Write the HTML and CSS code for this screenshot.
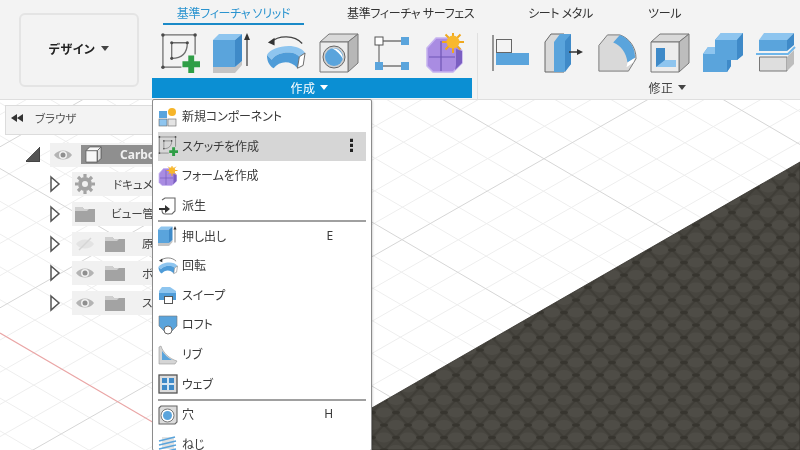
FILE: index.html
```html
<!DOCTYPE html>
<html lang="ja">
<head>
<meta charset="utf-8">
<title>デザイン</title>
<link rel="stylesheet" href="styles.css">
</head>
<body>
<svg class="sprite" width="0" height="0" aria-hidden="true">
  <defs>
    <symbol id="i-sketch" viewBox="0 0 41 41">
      <g fill="none" stroke="#6d6d6d" stroke-width="1.300">
        <path d="M3 2H36V22M3 2V35H22"/>
        <path d="M12 10H28M12 10V26"/>
        <path d="M28 10C28 20 23 26 12 26"/>
      </g>
      <g fill="#4a4a4a">
        <circle cx="3" cy="2" r="1.800"/><circle cx="36" cy="2" r="1.800"/><circle cx="3" cy="35" r="1.800"/>
        <circle cx="12" cy="10" r="1.600"/><circle cx="28" cy="10" r="1.600"/><circle cx="12" cy="26" r="1.600"/>
      </g>
      <path d="M29 23h6v6h6v6h-6v6h-6v-6h-6v-6h6z" fill="#2f9e46"/>
    </symbol>
    <symbol id="i-extrude" viewBox="0 0 40 40">
      <path d="M0 34H22L29 28V32L22 40H0z" fill="#c4c4c4"/>
      <path d="M0 7L6 1H29L22 7z" fill="#8ec5ef"/>
      <path d="M0 7H22V34H0z" fill="#5aa4dc"/>
      <path d="M22 7L29 1V28L22 34z" fill="#3f8ac8"/>
      <path d="M34 5V33" stroke="#444" stroke-width="1.300"/>
      <path d="M34 0L37 7H31z" fill="#333"/>
    </symbol>
    <symbol id="i-revolve" viewBox="0 0 42 40">
      <path d="M5 9C13 1 30 1 38 10" fill="none" stroke="#444" stroke-width="1.300"/>
      <path d="M2 9L9 4L9 12z" fill="#333"/>
      <path d="M1 22C6 12 34 8 41 20L35 24C30 17 12 18 6 27z" fill="#8ec5ef"/>
      <path d="M1 22L6 27C12 18 30 17 35 24L33 36C26 27 14 28 8 36C3 33 1 28 1 22z" fill="#4f9cd8"/>
      <path d="M35 24L41 20L39 33L33 36z" fill="#fff" stroke="#666" stroke-width="1"/>
    </symbol>
    <symbol id="i-hole" viewBox="0 0 40 40">
      <path d="M1 9L10 1H39L29 9z" fill="#d9d9d9" stroke="#777"/>
      <path d="M29 9L39 1V30L29 39z" fill="#b7b7b7" stroke="#777"/>
      <path d="M1 9H29V39H1z" fill="#ececec" stroke="#777"/>
      <circle cx="15" cy="24" r="11" fill="#cfcfcf" stroke="#666"/>
      <circle cx="15" cy="24" r="9" fill="#5aa4dc"/>
      <path d="M13 15.300C19 15 24 20 24 26C21 21 18 18 13 15.300z" fill="#fff"/>
    </symbol>
    <symbol id="i-pattern" viewBox="0 0 36 40">
      <path d="M5 8H31M5 8V33M9 33H31" stroke="#777" stroke-width="1.300" fill="none"/>
      <rect x="1" y="4" width="8" height="8" fill="#fff" stroke="#555"/>
      <rect x="27" y="4" width="8" height="8" fill="#5aa4dc"/>
      <rect x="1" y="29" width="8" height="8" fill="#5aa4dc"/>
      <rect x="27" y="29" width="8" height="8" fill="#5aa4dc"/>
    </symbol>
    <symbol id="i-form" viewBox="0 0 40 40">
      <path d="M2 15L11 5H26L37 18V30L28 39H8L2 33z" fill="#a98ce2" stroke="#c6b3f0" stroke-width="1.500" stroke-linejoin="round"/>
      <path d="M30 37L37 30V18L31 16V32z" fill="#7b5fc2"/>
      <path d="M4 24H30M16 8V38" stroke="#6f55b5" stroke-width="1.200"/>
      <g stroke="#f0a81e" stroke-width="2">
        <path d="M28 -2V20M17 9H39M20.500 1.500L35.500 16.500M35.500 1.500L20.500 16.500"/>
      </g>
      <circle cx="28" cy="9" r="6.500" fill="#f8b82e"/>
    </symbol>
    <symbol id="i-align" viewBox="0 0 40 40">
      <path d="M2 2V38" stroke="#777" stroke-width="1.500"/>
      <rect x="5.500" y="6.500" width="15" height="13" fill="#f3f3f3" stroke="#666"/>
      <rect x="5" y="20" width="33" height="12" fill="#5aa4dc"/>
    </symbol>
    <symbol id="i-press" viewBox="0 0 40 40">
      <path d="M1 39V9L7 1H20V39z" fill="#d9d9d9" stroke="#666"/>
      <path d="M10 9L16 1H27V31L20 39H10z" fill="#5aa4dc"/>
      <path d="M21 8L27 1V31L21 39z" fill="#3f8ac8"/>
      <path d="M25 19H36" stroke="#333" stroke-width="1.500"/>
      <path d="M39 19L33 16V22z" fill="#333"/>
    </symbol>
    <symbol id="i-fillet" viewBox="0 0 42 40">
      <path d="M2 39V12L11 1H24C33 4 41 13 41 26L33 39z" fill="#d9d9d9" stroke="#777"/>
      <path d="M17 9L24 1C33 4 40 13 40 25L32 30C31 20 25 12 17 9z" fill="#5aa4dc"/>
      <path d="M32 30L40 25L38 30L31 35z" fill="#fff"/>
    </symbol>
    <symbol id="i-shell" viewBox="0 0 40 40">
      <path d="M1 9L10 1H39L29 9z" fill="#d9d9d9" stroke="#777"/>
      <path d="M29 9L39 1V30L29 39z" fill="#bdbdbd" stroke="#777"/>
      <path d="M1 9H29V39H1z" fill="#ececec" stroke="#777"/>
      <path d="M6 15H15V27H26V34H6z" fill="#8ec5ef"/>
      <path d="M6 15H15V27L6 34z" fill="#3f8ac8"/>
    </symbol>
    <symbol id="i-combine" viewBox="0 0 40 40">
      <path d="M12 7L18 0H40V22L34 27H28V33L24 39H0V21L5 14H12z" fill="#5aa4dc"/>
      <path d="M12 7L18 0H40L34 7z" fill="#8ec5ef"/>
      <path d="M34 7L40 0V22L34 27z" fill="#3f8ac8"/>
      <path d="M0 21L5 14H12V21z" fill="#8ec5ef"/>
      <path d="M24 27H28V33L24 39z" fill="#3f8ac8"/>
    </symbol>
    <symbol id="i-split" viewBox="0 0 40 40">
      <path d="M3 7L8 0H38L31 7z" fill="#8ec5ef"/>
      <path d="M3 7H31V18H3z" fill="#5aa4dc"/>
      <path d="M31 7L38 0V12L31 18z" fill="#3f8ac8"/>
      <path d="M0 21H32L39 14" fill="none" stroke="#6fb6ea" stroke-width="2"/>
      <path d="M3.500 24H31V38H3.500z" fill="#dedede" stroke="#777"/>
      <path d="M31 24L38 17V31L31 38z" fill="#bdbdbd"/>
    </symbol>
    <symbol id="i-component" viewBox="0 0 20 20">
      <rect x="1" y="4" width="8" height="7" fill="#5aa4dc"/>
      <rect x="1" y="12" width="8" height="7" fill="#8ec5ef" stroke="#666" stroke-width=".6"/>
      <rect x="10" y="12" width="8" height="7" fill="#e4e4e4" stroke="#666" stroke-width=".6"/>
      <circle cx="14" cy="5" r="4" fill="#f6b52a"/>
    </symbol>
    <symbol id="i-derive" viewBox="0 0 20 20">
      <path d="M4 4L7 2H17V15L14 18H7C5 18 4 17 4 14" fill="none" stroke="#666" stroke-width="1.100"/>
      <path d="M1 12H7V9L12 13L7 17V14H1z" fill="#333"/>
    </symbol>
    <symbol id="i-sweep" viewBox="0 0 20 20">
      <path d="M1 6L4 2H12L18 6V10H1z" fill="#8ec5ef"/>
      <path d="M1 8H18V15H12V12H6V15H1z" fill="#4f9cd8"/>
      <rect x="6.500" y="11.500" width="8" height="7" fill="#fff" stroke="#555"/>
    </symbol>
    <symbol id="i-loft" viewBox="0 0 20 20">
      <path d="M1 1H19V11L14 16H6L1 11z" fill="#5aa4dc" stroke="#777" stroke-width=".6"/>
      <circle cx="10" cy="15" r="4" fill="#fff" stroke="#666"/>
    </symbol>
    <symbol id="i-rib" viewBox="0 0 20 20">
      <path d="M1 19V2L3 1C5 8 12 14 19 16L17 19z" fill="#d5d5d5" stroke="#999" stroke-width=".6"/>
      <path d="M4 15V6C7 10 10 13 14 15z" fill="#5aa4dc"/>
    </symbol>
    <symbol id="i-web" viewBox="0 0 20 20">
      <rect x="1" y="1" width="18" height="18" fill="#dcdcdc" stroke="#555" stroke-width="1.300"/>
      <rect x="4" y="4" width="12" height="12" fill="#3f8ac8"/>
      <path d="M10 4V16M4 10H16" stroke="#d6e6f3" stroke-width="2"/>
    </symbol>
    <symbol id="i-hole-sm" viewBox="0 0 20 20">
      <path d="M1 3L3 1H19V17L17 19H1z" fill="#dcdcdc" stroke="#666" stroke-width="1.100"/>
      <circle cx="9.500" cy="10.500" r="6.500" fill="#fff" stroke="#777"/>
      <circle cx="9.500" cy="10.500" r="4.500" fill="#5aa4dc"/>
    </symbol>
    <symbol id="i-thread" viewBox="0 0 20 20">
      <path d="M4 3H16V15H4z" fill="#e2e2e2"/>
      <path d="M1 7L17 3M1 11L18 7M1 15L18 11M1 19L18 15" stroke="#5aa4dc" stroke-width="1.500"/>
    </symbol>
    <symbol id="i-eye" viewBox="0 0 20 14">
      <path d="M1 7C5 1 15 1 19 7C15 13 5 13 1 7z" fill="#b4b4b4"/>
      <circle cx="10" cy="7" r="4" fill="#f1f1f1"/>
      <circle cx="10" cy="7" r="2.500" fill="#8f8f8f"/>
    </symbol>
    <symbol id="i-eye-off" viewBox="0 0 20 14">
      <path d="M1 7C5 1 15 1 19 7C15 13 5 13 1 7z" fill="#e3e3e3"/>
      <path d="M4 13L16 1" stroke="#d5d5d5" stroke-width="1.500"/>
    </symbol>
    <symbol id="i-folder" viewBox="0 0 20 16">
      <path d="M0 1H7L9 3H20V16H0z" fill="#a3a3a3"/>
      <path d="M0 1H7L9 3H14L12 5H0z" fill="#cfcfcf"/>
    </symbol>
    <symbol id="i-arrow" viewBox="0 0 12 18">
      <path d="M2 2L10 9L2 16z" fill="#fff" stroke="#555" stroke-width="1.500"/>
    </symbol>
    <symbol id="i-gear" viewBox="0 0 20 20">
      <circle cx="10" cy="10" r="5" fill="none" stroke="#a3a3a3" stroke-width="4"/>
      <path d="M10 0V20M0 10H20M3 3L17 17M17 3L3 17" stroke="#a3a3a3" stroke-width="3.200" stroke-dasharray="3.500 13 3.500"/>
    </symbol>
    <pattern id="mesh" width="24" height="25" patternUnits="userSpaceOnUse">
      <rect width="24" height="25" fill="#47453f"/>
      <ellipse cx="12" cy="0" rx="8" ry="5" fill="#4e4c46"/>
      <ellipse cx="12" cy="25" rx="8" ry="5" fill="#4e4c46"/>
      <ellipse cx="0" cy="12.500" rx="8" ry="5" fill="#4e4c46"/>
      <ellipse cx="24" cy="12.500" rx="8" ry="5" fill="#4e4c46"/>
      <path d="M0 0L12 12.500L24 0M0 25L12 12.500L24 25" fill="none" stroke="#403e38" stroke-width="2"/>
      <ellipse cx="12" cy="12.500" rx="4" ry="1.800" fill="#37352f"/>
      <ellipse cx="0" cy="0" rx="4" ry="1.800" fill="#37352f"/>
      <ellipse cx="24" cy="0" rx="4" ry="1.800" fill="#37352f"/>
      <ellipse cx="0" cy="25" rx="4" ry="1.800" fill="#37352f"/>
      <ellipse cx="24" cy="25" rx="4" ry="1.800" fill="#37352f"/>
    </pattern>
  </defs>
</svg>

<div class="app">
  <header class="ribbon">
    <div class="workspace">
      <button class="design-btn">デザイン<span class="caret caret-dark"></span></button>
    </div>
    <div class="ribbon-main">
      <nav class="tabs">
        <span class="tab tab-active">基準フィーチャ ソリッド</span>
        <span class="tab tab-surface">基準フィーチャ サーフェス</span>
        <span class="tab tab-sheet">シート メタル</span>
        <span class="tab tab-tools">ツール</span>
      </nav>
      <div class="groups">
        <section class="group group-create">
          <div class="tools">
            <svg class="tool"><use href="#i-sketch"/></svg>
            <svg class="tool"><use href="#i-extrude"/></svg>
            <svg class="tool"><use href="#i-revolve"/></svg>
            <svg class="tool"><use href="#i-hole"/></svg>
            <svg class="tool"><use href="#i-pattern"/></svg>
            <svg class="tool"><use href="#i-form"/></svg>
          </div>
          <div class="group-label group-label-on">作成<span class="caret caret-light"></span></div>
        </section>
        <section class="group group-modify">
          <div class="tools">
            <svg class="tool"><use href="#i-align"/></svg>
            <svg class="tool"><use href="#i-press"/></svg>
            <svg class="tool"><use href="#i-fillet"/></svg>
            <svg class="tool"><use href="#i-shell"/></svg>
            <svg class="tool"><use href="#i-combine"/></svg>
            <svg class="tool"><use href="#i-split"/></svg>
          </div>
          <div class="group-label">修正<span class="caret caret-dark"></span></div>
        </section>
      </div>
    </div>
  </header>

  <main class="viewport">
    <svg class="scene" width="800" height="350" viewBox="0 100 800 350">
      <rect x="0" y="100" width="800" height="350" fill="#fff"/>
      <g class="grid-minor">
        <path d="M0 37.300l800 468M0 70.100l800 468M0 102.900l800 468M0 135.700l800 468M0 201.300l800 468M0 234.100l800 468M0 266.900l800 468M0 299.700l800 468M0 365.300l800 468M0 398.100l800 468M0 430.900l800 468M0 -28.300l800 468M0 -61.100l800 468M0 -93.900l800 468M0 -126.700l800 468M0 -192.300l800 468M0 -225.100l800 468M0 -257.900l800 468M0 -290.700l800 468M0 -356.300l800 468"/>
        <path d="M0 114.600l800 -456M0 179l800 -456M0 211.200l800 -456M0 243.400l800 -456M0 275.600l800 -456M0 340l800 -456M0 372.200l800 -456M0 404.400l800 -456M0 436.600l800 -456M0 501l800 -456M0 533.200l800 -456M0 565.400l800 -456M0 597.600l800 -456M0 662l800 -456M0 694.200l800 -456M0 726.400l800 -456M0 758.600l800 -456M0 823l800 -456M0 855.200l800 -456M0 887.400l800 -456M0 919.600l800 -456"/>
      </g>
      <g class="grid-major">
        <path d="M0 -323.500l800 468M0 -159.500l800 468M0 4.500l800 468M0 168.500l800 468"/>
        <path d="M0 146.800l800 -456M0 307.800l800 -456M0 468.800l800 -456M0 629.800l800 -456M0 790.800l800 -456"/>
      </g>
      <path class="axis" d="M0 333L370 549"/>
      <path class="ground" d="M370 409L800 162V450H370z" fill="url(#mesh)"/>
    </svg>

    <aside class="browser">
      <div class="browser-head">
        <svg class="rewind" viewBox="0 0 12 8"><path d="M0 4L6 0V8zM6 4L12 0V8z" fill="#333"/></svg>
        <span class="browser-title">ブラウザ</span>
      </div>
      <ul class="tree">
        <li class="row row-root">
          <span class="collapse"></span>
          <div class="row-body">
            <svg class="eye"><use href="#i-eye"/></svg>
            <div class="chip">
              <svg class="cube" viewBox="0 0 20 20"><path d="M2 6L6 2H18V14L14 18H2z" fill="#f7f7f7" stroke="#666"/><path d="M14 6L18 2V14L14 18z" fill="#dcdcdc" stroke="#666"/><path d="M2 6H14V18" fill="none" stroke="#666"/></svg>
              <span class="chip-text">Carbon</span>
            </div>
          </div>
        </li>
        <li class="row">
          <svg class="arrow"><use href="#i-arrow"/></svg>
          <div class="row-body">
            <svg class="gear"><use href="#i-gear"/></svg>
            <span class="label">ドキュメント設定</span>
          </div>
        </li>
        <li class="row">
          <svg class="arrow"><use href="#i-arrow"/></svg>
          <div class="row-body">
            <svg class="folder folder-first"><use href="#i-folder"/></svg>
            <span class="label">ビュー管理</span>
          </div>
        </li>
        <li class="row">
          <svg class="arrow"><use href="#i-arrow"/></svg>
          <div class="row-body">
            <svg class="eye"><use href="#i-eye-off"/></svg>
            <svg class="folder"><use href="#i-folder"/></svg>
            <span class="label">原点</span>
          </div>
        </li>
        <li class="row">
          <svg class="arrow"><use href="#i-arrow"/></svg>
          <div class="row-body">
            <svg class="eye"><use href="#i-eye"/></svg>
            <svg class="folder"><use href="#i-folder"/></svg>
            <span class="label">ボディ</span>
          </div>
        </li>
        <li class="row">
          <svg class="arrow"><use href="#i-arrow"/></svg>
          <div class="row-body">
            <svg class="eye"><use href="#i-eye"/></svg>
            <svg class="folder"><use href="#i-folder"/></svg>
            <span class="label">スケッチ</span>
          </div>
        </li>
      </ul>
    </aside>

    <div class="menu">
      <div class="item"><svg class="item-icon"><use href="#i-component"/></svg><span>新規コンポーネント</span></div>
      <div class="item item-hover"><svg class="item-icon"><use href="#i-sketch"/></svg><span>スケッチを作成</span><span class="kebab">⋮</span></div>
      <div class="item"><svg class="item-icon"><use href="#i-form"/></svg><span>フォームを作成</span></div>
      <div class="item"><svg class="item-icon"><use href="#i-derive"/></svg><span>派生</span></div>
      <div class="sep"></div>
      <div class="item"><svg class="item-icon"><use href="#i-extrude"/></svg><span>押し出し</span><span class="key">E</span></div>
      <div class="item"><svg class="item-icon"><use href="#i-revolve"/></svg><span>回転</span></div>
      <div class="item"><svg class="item-icon"><use href="#i-sweep"/></svg><span>スイープ</span></div>
      <div class="item"><svg class="item-icon"><use href="#i-loft"/></svg><span>ロフト</span></div>
      <div class="item"><svg class="item-icon"><use href="#i-rib"/></svg><span>リブ</span></div>
      <div class="item"><svg class="item-icon"><use href="#i-web"/></svg><span>ウェブ</span></div>
      <div class="sep"></div>
      <div class="item"><svg class="item-icon"><use href="#i-hole-sm"/></svg><span>穴</span><span class="key">H</span></div>
      <div class="item"><svg class="item-icon"><use href="#i-thread"/></svg><span>ねじ</span></div>
    </div>
  </main>
</div>
</body>
</html>
```

FILE: styles.css
```css
* { box-sizing: border-box; }

html, body {
  margin: 0;
  padding: 0;
  width: 800px;
  height: 450px;
  overflow: hidden;
  background: #fff;
}

.sprite { position: absolute; }

.app {
  width: 800px;
  height: 450px;
  overflow: hidden;
  display: flex;
  flex-direction: column;
  font-family: "Noto Sans CJK JP", "Noto Sans", sans-serif;
  font-size: 12px;
  font-feature-settings: "palt";
  color: #333;
  filter: blur(0.3px);
}

/* Ribbon */
.ribbon {
  height: 100px;
  flex: none;
  display: flex;
  background: #f3f3f3;
  border-bottom: 1px solid #dedede;
}

.workspace {
  width: 152px;
  flex: none;
  padding: 13px 13px 12px 19px;
}

.design-btn {
  width: 100%;
  height: 100%;
  border: 2px solid #e4e4e4;
  border-radius: 6px;
  background: #f3f3f3;
  font: inherit;
  font-weight: 700;
  letter-spacing: 0.4px;
  color: #222;
  display: flex;
  align-items: center;
  justify-content: center;
  gap: 6px;
  padding: 0 0 4px;
}

.ribbon-main {
  flex: 1;
  display: flex;
  flex-direction: column;
}

.tabs {
  height: 26px;
  flex: none;
  display: flex;
  padding-left: 11px;
  line-height: 26px;
}

.tab { white-space: nowrap; letter-spacing: -0.3px; }

.tab-active {
  width: 141px;
  text-align: center;
  color: #2a93cf;
  border-bottom: 2px solid #1a8ac8;
  height: 25px;
}

.tab-surface { margin-left: 43px; width: 126px; text-align: center; }
.tab-sheet { margin-left: 55px; width: 65px; text-align: center; }
.tab-tools { margin-left: 55px; width: 32px; text-align: center; }

.groups { display: flex; flex: 1; }

.group {
  display: flex;
  flex-direction: column;
}

.group-create { width: 325px; }

.group-modify {
  flex: 1;
  margin-top: 7px;
  border-left: 1px solid #e0e0e0;
  padding-left: 13px;
}

.group-create .tools { margin-top: 7px; padding-left: 8px; }

.tools {
  display: flex;
  gap: 13px;
  height: 45px;
  flex: none;
}

.tool {
  width: 40px;
  height: 40px;
  flex: none;
  overflow: visible;
}

.group-label {
  display: flex;
  align-items: center;
  justify-content: center;
  gap: 4px;
  height: 20px;
  color: #444;
  letter-spacing: 0.5px;
  padding-bottom: 2px;
}

.group-label-on {
  width: 320px;
  background: #0b8fd3;
  color: #fff;
  padding-right: 6px;
}

.group-modify .group-label { width: 352px; }

.caret {
  width: 0;
  height: 0;
  border-left: 4px solid transparent;
  border-right: 4px solid transparent;
  border-top: 5px solid currentColor;
  display: inline-block;
}

.caret-dark { color: #444; }
.caret-light { color: #fff; }

/* Viewport */
.viewport {
  position: relative;
  flex: 1;
  min-height: 0;
}

.scene {
  display: block;
  position: absolute;
  inset: 0;
}

.grid-minor path { stroke: #eeeeee; stroke-width: 1; fill: none; }
.grid-major path { stroke: #d6d6d6; stroke-width: 1; fill: none; }
.axis { stroke: #eaa5a5; stroke-width: 1.100; fill: none; }
.ground { stroke: #33312c; stroke-width: 0.800; }

/* Browser panel */
.browser {
  position: absolute;
  left: 5px;
  top: 5px;
  width: 160px;
}

.browser-head {
  height: 30px;
  display: flex;
  align-items: center;
  background: #f3f3f3;
  border: 1px solid #dcdcdc;
  padding: 0 0 4px 5px;
  color: #555;
  font-size: 11.500px;
}

.rewind { width: 12px; height: 8px; margin-right: 12px; flex: none; }

.tree {
  list-style: none;
  margin: 0;
  padding: 5px 0 0;
}

.row {
  height: 29.600px;
  display: flex;
  align-items: center;
  padding-left: 44px;
}

.row-root { padding-left: 21px; }

.collapse {
  width: 14px;
  height: 15px;
  background: linear-gradient(135deg, transparent 49%, #555 50%);
  border-right: 1px solid #444;
  border-bottom: 1px solid #444;
  margin-right: 10px;
  flex: none;
}

.arrow { width: 12px; height: 18px; flex: none; margin-right: 11px; }

.row-body {
  height: 24px;
  flex: 1;
  display: flex;
  align-items: center;
  background: #f1f1f1;
  padding-left: 3px;
  font-size: 11.500px;
  white-space: nowrap;
  min-width: 0;
}

.eye { width: 20px; height: 14px; flex: none; margin-right: 10px; }
.folder { width: 20px; height: 16px; flex: none; margin-right: 17px; }
.gear { width: 20px; height: 20px; flex: none; margin-right: 18px; }
.folder-first { margin-right: 16px; }
.label { color: #444; margin-top: -1px; }

.eye + .chip { margin-left: -2px; }

.chip {
  flex: 1;
  height: 19px;
  background: #8f8f8f;
  display: flex;
  align-items: center;
  padding-left: 3px;
}

.cube { width: 19px; height: 19px; flex: none; margin-right: 17px; }
.chip-text { color: #f0f0f0; font-weight: 700; font-size: 12px; font-family: "Noto Sans", sans-serif; }

/* Create menu */
.menu {
  position: absolute;
  left: 152px;
  top: -1px;
  width: 220px;
  height: 352px;
  background: #fff;
  border: 1px solid #8c8c8c;
  border-radius: 2px;
  padding: 2px 5px 0;
  box-shadow: 1px 1px 2px rgba(0,0,0,0.15);
}

.item {
  height: 29.600px;
  display: flex;
  align-items: center;
  white-space: nowrap;
  color: #3a3a3a;
  letter-spacing: -0.1px;
  line-height: 13px;
}

.item span { margin-top: -2px; }

.item-icon { width: 20px; height: 20px; flex: none; margin-right: 4px; }

.item-hover { background: #d6d6d6; }

.kebab {
  margin-left: auto;
  margin-right: 6px;
  font-size: 17px;
  font-weight: 700;
  color: #222;
  font-family: "DejaVu Sans", sans-serif;
}

.key {
  margin-left: auto;
  margin-right: 33px;
  font-family: "Noto Sans", sans-serif;
}

.sep {
  height: 2px;
  margin-bottom: -1px;
  background: #a0a0a0;
}
```
